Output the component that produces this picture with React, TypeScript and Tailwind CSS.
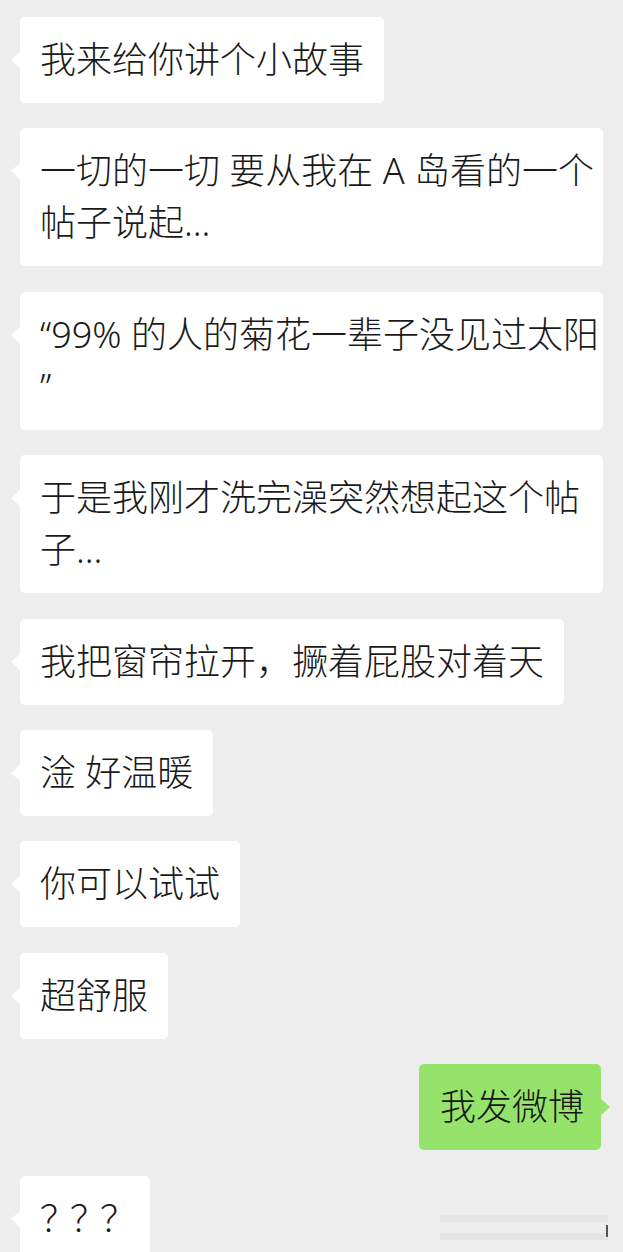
import React from 'react'

const font = { fontFamily: '"Noto Sans", "Noto Sans CJK SC", sans-serif' }

interface BubbleProps {
  lines: string[]
  mine?: boolean
  extra?: string
}

const Bubble: React.FC<BubbleProps> = ({ lines, mine, extra }) => {
  if (mine) {
    return (
      <div className="relative self-end mr-[2px]">
        <div className="bg-[#95e36b] rounded-[5px] pl-[21px] pr-[17px] py-[17px] text-[36px] leading-[52px] font-light text-[#161616] whitespace-nowrap">
          {lines[0]}
        </div>
        <div className="absolute top-[35px] -right-[9px] w-0 h-0 border-y-[8px] border-y-transparent border-l-[9px] border-l-[#95e36b]" />
      </div>
    )
  }

  return (
    <div className="relative self-start">
      <div className={`bg-white rounded-[5px] px-5 py-[17px] text-[36px] leading-[52px] font-light text-[#1a1a1a] whitespace-nowrap ${extra || ''}`}>
        {lines.map((l, i) => (
          <div key={i}>{l}</div>
        ))}
      </div>
      <div className="absolute top-[35px] -left-[9px] w-0 h-0 border-y-[8px] border-y-transparent border-r-[9px] border-r-white" />
    </div>
  )
}

export default function App() {
  return (
    <div className="relative h-[1252px] overflow-hidden bg-[#ededed]" style={font}>
      <div className="flex flex-col gap-[25.4px] px-5 pt-[17px]">
        <Bubble lines={['我来给你讲个小故事']} />
        <Bubble lines={['一切的一切 要从我在 A 岛看的一个', '帖子说起...']} extra="w-[583px]" />
        <Bubble lines={['“99% 的人的菊花一辈子没见过太阳', '”']} extra="w-[583px]" />
        <Bubble lines={['于是我刚才洗完澡突然想起这个帖', '子...']} extra="w-[583px]" />
        <Bubble lines={['我把窗帘拉开，撅着屁股对着天']} />
        <Bubble lines={['淦 好温暖']} />
        <Bubble lines={['你可以试试']} />
        <Bubble lines={['超舒服']} />
        <Bubble lines={['我发微博']} mine />
        <Bubble lines={['？？？']} extra="tracking-[-6px]" />
      </div>

      {/* faded watermark */}
      <div className="absolute left-[440px] top-[1215px] w-[168px] h-[25px] flex flex-col justify-between">
        <div className="h-[7px] bg-[#e4e4e4] opacity-80" />
        <div className="h-[7px] bg-[#e2e2e2] opacity-80" />
        <div className="absolute right-0 top-[10px] w-[2px] h-[12px] bg-[#555]" />
      </div>
    </div>
  )
}
